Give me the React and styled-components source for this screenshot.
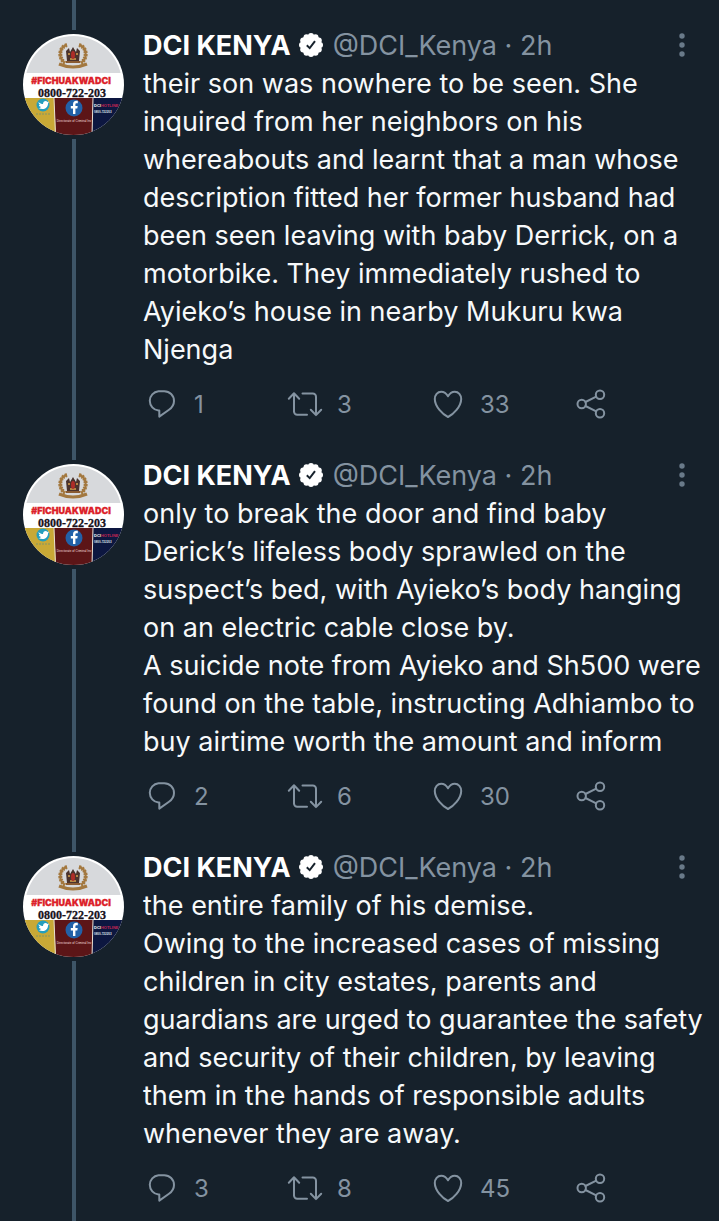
import styled, { createGlobalStyle } from "styled-components";

const GlobalStyle = createGlobalStyle`
* { box-sizing: border-box; }
body {
  margin: 0;
  background-color: #16212b;
  font-family: Inter, "Liberation Sans", sans-serif;
}
`;

const Thread = styled.main`
display: flex;
flex-direction: column;
min-height: 100vh;
background-color: #16212b;
color: #f7f9fa;
`;

const Tweet = styled.article`
display: flex;
flex-direction: row;
&:last-child { flex-grow: 1; }
`;

const Rail = styled.div`
display: flex;
flex-direction: column;
align-items: flex-start;
flex: none;
width: 143px;
padding-left: 23px;
`;

const RailColumn = styled.div`
display: flex;
flex-direction: column;
align-items: center;
flex-grow: 1;
gap: 4px;
`;

const Line = styled.div`
width: 4px;
height: 30px;
background-color: #3e5567;
flex-grow: ${(props) => (props.$grow ? 1 : 0)};
`;

const AvatarLink = styled.a`
display: block;
width: 101px;
height: 101px;
`;

const Content = styled.div`
flex: 1;
min-width: 0;
padding-top: 26px;
padding-right: 4px;
`;

const Head = styled.header`
display: flex;
flex-direction: row;
align-items: center;
height: 38px;
font-size: 27px;
white-space: nowrap;
`;

const Name = styled.a`
color: #ffffff;
font-weight: 700;
text-decoration: none;
`;

const Badge = styled.svg`
flex: none;
width: 26px;
height: 26px;
margin: 0 9px 0 7px;
`;

const Meta = styled.span`
color: #8493a1;
`;

const MoreButton = styled.button`
display: flex;
margin-left: auto;
margin-right: 21px;
padding: 0;
border: none;
background: none;
color: #697a89;
cursor: pointer;
`;

const Body = styled.p`
margin: 0;
padding-top: 1px;
font-size: 27px;
line-height: 38px;
white-space: pre-line;
`;

const Actions = styled.div`
display: grid;
grid-template-columns: repeat(4, 1fr);
padding: 16px 0 7px;
`;

const Action = styled.button`
display: flex;
align-items: center;
gap: 13px;
height: 38px;
padding: 0;
border: none;
background: none;
color: #8493a1;
font-family: inherit;
font-size: 24px;
cursor: pointer;
`;

const ActionIcon = styled.svg`
flex: none;
width: 38px;
height: 32px;
fill: none;
stroke: currentColor;
stroke-width: 2;
stroke-linejoin: round;
stroke-linecap: round;
`;

const tweets = [
  {
    id: 1,
    replies: 1,
    retweets: 3,
    likes: 33,
    text: `their son was nowhere to be seen. She
inquired from her neighbors on his
whereabouts and learnt that a man whose
description fitted her former husband had
been seen leaving with baby Derrick, on a
motorbike. They immediately rushed to
Ayieko’s house in nearby Mukuru kwa
Njenga`,
  },
  {
    id: 2,
    replies: 2,
    retweets: 6,
    likes: 30,
    text: `only to break the door and find baby
Derick’s lifeless body sprawled on the
suspect’s bed, with Ayieko’s body hanging
on an electric cable close by.
A suicide note from Ayieko and Sh500 were
found on the table, instructing Adhiambo to
buy airtime worth the amount and inform`,
  },
  {
    id: 3,
    replies: 3,
    retweets: 8,
    likes: 45,
    text: `the entire family of his demise.
Owing to the increased cases of missing
children in city estates, parents and
guardians are urged to guarantee the safety
and security of their children, by leaving
them in the hands of responsible adults
whenever they are away.`,
  },
];

function Avatar({ id }) {
  const clip = "avatar-" + id;
  const inner = "avatar-inner-" + id;
  return <svg viewBox="0 0 101 101" width="101" height="101" aria-hidden="true">
    <clipPath id={clip}><circle cx="50.5" cy="50.5" r="50.5" /></clipPath>
    <clipPath id={inner}><circle cx="50.5" cy="50.5" r="48.5" /></clipPath>
    <g clipPath={`url(#${clip})`}>
      <rect width="101" height="101" fill="#fff" />
      <rect width="101" height="39" fill="#d7d9dc" clipPath={`url(#${inner})`} />
      <rect y="64" width="33" height="37" fill="#c9a936" />
      <path d="M31 64h39l-1 37H33z" fill="#5c1517" />
      <path d="M70 64h31v37H69z" fill="#0d1740" />
      <path d="M31 64l1.5 37M70 64l-1 37" stroke="#e9dfd2" strokeWidth="1" />
      {/* coat of arms */}
      <g fill="none" stroke="#a3783f">
        <path d="M44 11c-8 2-9 13-2 18M56 11c8 2 9 13 2 18" strokeWidth="4" strokeDasharray="2 1" />
        <path d="M44 11c-8 2-9 13-2 18M56 11c8 2 9 13 2 18" strokeWidth="2" />
        <path d="M36 30q7 3 14 3t14-3" strokeWidth="3" />
      </g>
      <path d="M43 17l3-3 1 4 3-5 3 5 1-4 3 3-1 10h-3l-3 2-3-2h-3z" fill="#4b332c" />
      <path d="M45 20h2M53 20h2M47 25h6" stroke="#d7a34e" strokeWidth="1.5" />
      <ellipse cx="50" cy="21" rx="2" ry="4" fill="#ad2d28" />
      <path d="M43 28h14" stroke="#8a5b32" strokeWidth="2" />
      <text x="48" y="50" textAnchor="middle" fontFamily="Inter, sans-serif" fontWeight="900" fontSize="9" fill="#dc1f2a" stroke="#dc1f2a" strokeWidth=".3">#FICHUAKWADCI</text>
      <text x="49" y="63" textAnchor="middle" fontFamily="Liberation Serif, serif" fontWeight="700" fontSize="12" fill="#17131b" stroke="#17131b" strokeWidth=".3">0800-722-203</text>
      <circle cx="20" cy="71" r="6.5" fill="#249ebd" />
      <path d="M15.500 68c1.500 1.500 3 2 4.500 2 0-3 3-4 4.500-2l1.500-.5-1 2c0 5-5 7-9.500 4.500 1.500 0 2-.5 2.500-1-1.500-.5-2-1-2-2l1 0c-1-.8-1.500-2-1.500-3z" fill="#fff" />
      <path d="M13 80h15" stroke="#9a9c55" strokeWidth="1.500" strokeDasharray="2 1" />
      <circle cx="51" cy="74" r="8.500" fill="#2261a8" />
      <path d="M50 80v-5.500h-2.200V72H50v-1.500c0-2.500 1.300-3.700 3.300-3.700h1.500v2.400h-1.200c-.9 0-1.200.5-1.200 1.300V72h2.300l-.4 2.500h-1.900V80z" fill="#fff" />
      <text x="51" y="88" textAnchor="middle" fontFamily="Liberation Sans, sans-serif" fontSize="3" fill="#f0dcdc">Directorate of Criminal Inv</text>
      <text x="71" y="73" fontFamily="Liberation Sans, sans-serif" fontWeight="700" fontSize="4" fill="#fff">DCI<tspan fill="#c32553">HOTLINE</tspan></text>
      <text x="71" y="79" fontFamily="Liberation Sans, sans-serif" fontWeight="700" fontSize="3" fill="#dfe2ee">0800-722203</text>
    </g>
  </svg>;
}

const bumps = Array.from({ length: 12 }, (_, i) => (i * Math.PI) / 6);

function VerifiedBadge() {
  return <Badge viewBox="0 0 26 26" role="img" aria-label="Verified account">
    <circle cx="13" cy="13" r="10.500" fill="#fff" />
    {bumps.map((a) => <circle key={a} cx={13 + 9 * Math.cos(a)} cy={13 + 9 * Math.sin(a)} r="3" fill="#fff" />)}
    <path d="M8.800 13.300l2.900 2.800 5.300-7" fill="none" stroke="#16212b" strokeWidth="2" />
  </Badge>;
}

function TweetItem({ tweet }) {
  return <Tweet>
    <Rail>
      <RailColumn>
        <Line />
        <AvatarLink href="#profile" aria-label="DCI KENYA profile"><Avatar id={tweet.id} /></AvatarLink>
        <Line $grow />
      </RailColumn>
    </Rail>
    <Content>
      <Head>
        <Name href="#profile">DCI KENYA</Name>
        <VerifiedBadge />
        <Meta>@DCI_Kenya · 2h</Meta>
        <MoreButton aria-label="More">
          <svg width="24" height="26" viewBox="0 0 24 26" fill="currentColor">
            <circle cx="12" cy="4" r="2.700" />
            <circle cx="12" cy="13" r="2.700" />
            <circle cx="12" cy="22" r="2.700" />
          </svg>
        </MoreButton>
      </Head>
      <Body>{tweet.text}</Body>
      <Actions>
        <Action aria-label="Reply">
          <ActionIcon viewBox="-3 0 38 32">
            <path d="M12.500 3.200H18.300a9.700 9.700 0 0 1 9.700 9.700c0 4-2 6.600-5 8.800L13.300 28.600V22.500h-.8A9.700 9.700 0 0 1 12.500 3.200z" />
          </ActionIcon>
          {tweet.replies}
        </Action>
        <Action aria-label="Retweet">
          <ActionIcon viewBox="-1 0 38 32">
            <path d="M1.800 10.700L7 5.300l5.200 5.400M7 5.500V23.500a3.200 3.200 0 0 0 3.200 3.200H20M15.500 5.500H25.800A3.200 3.200 0 0 1 29 8.700V27M23.800 21.700l5.200 5.400 5.200-5.400" />
          </ActionIcon>
          {tweet.retweets}
        </Action>
        <Action aria-label="Like">
          <ActionIcon viewBox="-3 0 38 32">
            <path d="M16 8.300C14.300 5.200 11.700 3.700 9.200 3.700 5.500 3.700 2.800 7 2.800 11c0 7.500 8 15.500 13.200 18 5.200-2.500 13.200-10.500 13.200-18 0-4-2.700-7.300-6.400-7.300-2.500 0-5.100 1.500-6.800 4.600z" />
          </ActionIcon>
          {tweet.likes}
        </Action>
        <Action aria-label="Share">
          <ActionIcon viewBox="-4 0 38 32">
            <circle cx="5.700" cy="16" r="4.200" />
            <circle cx="24" cy="6.700" r="4.200" />
            <circle cx="24" cy="25.300" r="4.200" />
            <path d="M9.500 14l10.700-5.400M9.500 18l10.700 5.400" />
          </ActionIcon>
        </Action>
      </Actions>
    </Content>
  </Tweet>;
}

function App() {
  return <>
    <GlobalStyle />
    <Thread>
      {tweets.map((tweet) => <TweetItem key={tweet.id} tweet={tweet} />)}
    </Thread>
  </>;
}

export default App;
